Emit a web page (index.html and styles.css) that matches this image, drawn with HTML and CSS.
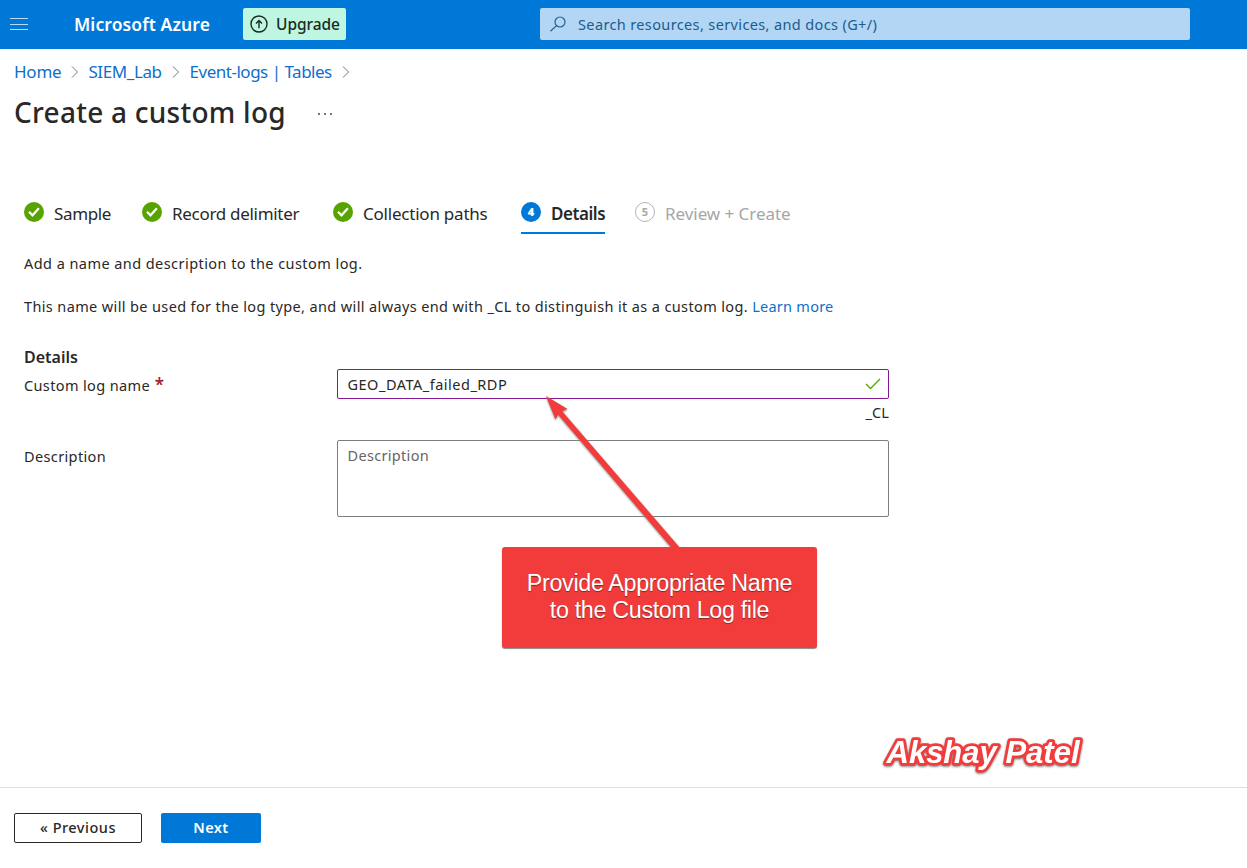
FILE: index.html
```html
<!DOCTYPE html>
<html lang="en">
<head>
<meta charset="utf-8">
<title>Create a custom log - Microsoft Azure</title>
<link rel="stylesheet" href="styles.css">
</head>
<body>
<header class="topbar">
  <svg class="menu" width="18" height="12" viewBox="0 0 18 12"><path d="M0 .5h18M0 6.5h18M0 11.5h18" stroke="#b9dcf6" fill="none"/></svg>
  <span class="brand">Microsoft Azure</span>
  <button class="upgrade">
    <svg width="18" height="18" viewBox="0 0 18 18" fill="none" stroke="#172b24" stroke-width="1.4"><circle cx="9" cy="9" r="8"/><path d="M9 13.2V5.6M6 8.4l3-3 3 3"/></svg>
    <span>Upgrade</span>
  </button>
  <div class="search">
    <svg width="16" height="16" viewBox="0 0 16 16" fill="none" stroke="#275f94" stroke-width="1.2"><circle cx="10" cy="6" r="5"/><path d="M6.4 9.6.5 15.3"/></svg>
    <span>Search resources, services, and docs (G+/)</span>
  </div>
</header>
<nav class="crumbs">
  <a class="c-home">Home</a><svg class="chev" width="8" height="12" viewBox="0 0 8 12"><path d="M1 .5 6.5 6 1 11.5"/></svg>
  <a class="c-lab">SIEM_Lab</a><svg class="chev" width="8" height="12" viewBox="0 0 8 12"><path d="M1 .5 6.5 6 1 11.5"/></svg>
  <a class="c-tables">Event-logs | Tables</a><svg class="chev" width="8" height="12" viewBox="0 0 8 12"><path d="M1 .5 6.5 6 1 11.5"/></svg>
</nav>
<div class="title-row">
  <h1>Create a custom log</h1>
  <svg width="16" height="4" viewBox="0 0 16 4" fill="#333"><circle cx="2" cy="2" r=".9"/><circle cx="8" cy="2" r=".9"/><circle cx="14" cy="2" r=".9"/></svg>
</div>
<main>
  <div class="steps">
    <div class="step s1"><svg class="dot" viewBox="0 0 20 20"><circle cx="10" cy="10" r="10" fill="#57a300"/><path d="m5 9.8 3.5 3.5 6.4-7" fill="none" stroke="#fff" stroke-width="2.2"/></svg><span>Sample</span></div>
    <div class="step s2"><svg class="dot" viewBox="0 0 20 20"><circle cx="10" cy="10" r="10" fill="#57a300"/><path d="m5 9.8 3.5 3.5 6.4-7" fill="none" stroke="#fff" stroke-width="2.2"/></svg><span>Record delimiter</span></div>
    <div class="step s3"><svg class="dot" viewBox="0 0 20 20"><circle cx="10" cy="10" r="10" fill="#57a300"/><path d="m5 9.8 3.5 3.5 6.4-7" fill="none" stroke="#fff" stroke-width="2.2"/></svg><span>Collection paths</span></div>
    <div class="step s4"><b class="dot num">4</b><span>Details</span></div>
    <div class="step s5"><b class="dot num">5</b><span>Review + Create</span></div>
  </div>
  <p class="intro">Add a name and description to the custom log.</p>
  <p class="note"><span>This name will be used for the log type, and will always end with _CL to distinguish it as a custom log.</span> <a>Learn more</a></p>
  <h2>Details</h2>
  <div class="field name-field">
    <label><span>Custom log name</span> <i>*</i></label>
    <div class="control">
      <div class="input"><span>GEO_DATA_failed_RDP</span><svg width="16" height="12" viewBox="0 0 16 12"><path d="m1 6 4.5 4.5L15 1" fill="none" stroke="#57a300" stroke-width="1.3"/></svg></div>
      <div class="suffix">_CL</div>
    </div>
  </div>
  <div class="field">
    <label><span>Description</span></label>
    <div class="control"><div class="area"><span>Description</span></div></div>
  </div>
</main>
<footer>
  <button class="prev"><span>« Previous</span></button>
  <button class="next"><span>Next</span></button>
</footer>
<svg class="arrow" width="150" height="165" viewBox="540 390 150 165"><path d="M546 396 567.5 409 562.2 411.2 681 549 676 553 558 414.5 555.5 419.5Z" fill="#f23c3c"/></svg>
<div class="callout">Provide Appropriate Name<br>to the Custom Log file</div>
<svg class="signature" width="220" height="50"><text x="11.5" y="32.5" textLength="193" lengthAdjust="spacingAndGlyphs">Akshay Patel</text></svg>
</body>
</html>
```

FILE: styles.css
```css
* { box-sizing: border-box; }
body { margin: 0; height: 868px; position: relative; display: flex; flex-direction: column; overflow: hidden; background: #fff; color: #292827; font: 14.5px/20px "Noto Sans", "Open Sans", sans-serif; letter-spacing: .37px; }
button { font: inherit; padding: 0; }
span, a, h1 { white-space: nowrap; }
a { color: #0f6fca; }
.topbar { height: 49px; flex: none; background: #0078d7; display: flex; align-items: center; padding: 0 0 1px 10px; }
.menu { width: 18px; margin-right: 46px; }
.brand { width: 169px; color: #fff; font-size: 17.5px; font-weight: 600; letter-spacing: .1px; }
.upgrade { width: 103px; height: 32px; border: 0; border-radius: 2px; background: #bff6e1; color: #172b24; display: flex; align-items: center; gap: 8px; padding-left: 7px; font-weight: 500; font-size: 15.5px; letter-spacing: -.05px; }
.search { width: 650px; height: 32px; margin-left: 194px; border-radius: 2px; background: #b2d6f3; color: #205b90; display: flex; align-items: center; gap: 12px; padding-left: 10px; }
.crumbs { display: flex; align-items: center; height: 22px; margin: 12px 0 0 14px; font-size: 17px; letter-spacing: -.4px; }
.c-home { letter-spacing: -.25px; }
.c-tables { margin-left: 1px; letter-spacing: -.49px; }
.chev { margin: 0 9px 0 10px; fill: none; stroke: #777; }
.title-row { display: flex; align-items: center; height: 40px; margin: 10px 0 0 14px; gap: 31px; }
.title-row svg { margin-top: 2px; }
h1 { margin: -2px 0 0; font-size: 28px; line-height: 40px; font-weight: 500; letter-spacing: .25px; }
main { flex: 1; padding: 68px 0 0 24px; }
.steps { display: flex; height: 33px; font-size: 17px; letter-spacing: -.35px; }
.step { display: flex; height: 33px; align-items: flex-start; line-height: 26px; gap: 10px; }
.dot { width: 20px; height: 20px; flex: none; margin-top: 1px; }
.s1 { width: 118px; } .s2 { width: 191px; letter-spacing: -.3px; } .s3 { width: 188px; letter-spacing: -.22px; }
.s4 { width: 84px; margin-right: 30px; border-bottom: 2px solid #0078d7; font-weight: 600; letter-spacing: -.45px; }
.num { border-radius: 50%; background: #0078d7; color: #fff; font-size: 11px; line-height: 20px; text-align: center; letter-spacing: 0; }
.s5 { color: #a6a6a6; letter-spacing: -.05px; }
.s5 .num { background: none; border: 1px solid #b5b5b5; color: #a6a6a6; line-height: 18px; }
p { margin: 0; }
.intro { margin-top: 19px; letter-spacing: .44px; }
.note { margin-top: 23px; }
.note a { letter-spacing: .25px; }
h2 { margin: 31px 0 0; font-size: 16px; line-height: 20px; font-weight: 600; letter-spacing: 0; }
.field { display: flex; }
label { width: 313px; padding-top: 6px; }
label i { margin-left: .5px; font-size: 17px; line-height: 18px; font-style: normal; color: #a4262c; font-weight: 600; }
.name-field { height: 71px; margin-top: 2px; }
.control { width: 552px; }
.input { height: 30px; border: 1px solid #881798; border-radius: 2px; padding: 0 7px 0 9.5px; display: flex; align-items: center; justify-content: space-between; font-size: 14.5px; letter-spacing: .5px; }
.suffix { text-align: right; margin-top: 3px; letter-spacing: .1px; }
.area { height: 77px; border: 1px solid #7e7e7e; border-radius: 2px; padding: 4px 9.5px; color: #666; letter-spacing: .32px; }
footer { height: 81px; border-top: 1px solid #dedede; padding: 25px 0 0 14px; display: flex; gap: 19px; font-weight: 600; }
footer span { position: relative; top: -1px; }
.prev { width: 128px; height: 30px; border: 1px solid #292827; border-radius: 2px; background: #fff; color: #292827; font-weight: 500; letter-spacing: .5px; }
.next { width: 100px; height: 30px; border: 0; border-radius: 2px; background: #0078d7; color: #fff; letter-spacing: .4px; }
.arrow { position: absolute; left: 540px; top: 390px; filter: drop-shadow(0 1px 1px #888); }
.callout { position: absolute; left: 502px; top: 547px; width: 315px; height: 101px; padding-top: 23px; border-radius: 3px; background: #f23c3c; box-shadow: 0 1px 1px #888; color: #fff; text-align: center; font: 23.3px/27px "Liberation Sans", Arial, sans-serif; letter-spacing: -.33px; text-shadow: 0 1px 1px #8a2020; }
.signature { position: absolute; left: 875px; top: 730px; filter: drop-shadow(0 1px 1px #777); }
.signature text { font: italic bold 31px "Liberation Sans", Arial, sans-serif; letter-spacing: 0; fill: #fff; stroke: #f23c3c; stroke-width: 5.5px; stroke-linejoin: round; paint-order: stroke fill; }
```
